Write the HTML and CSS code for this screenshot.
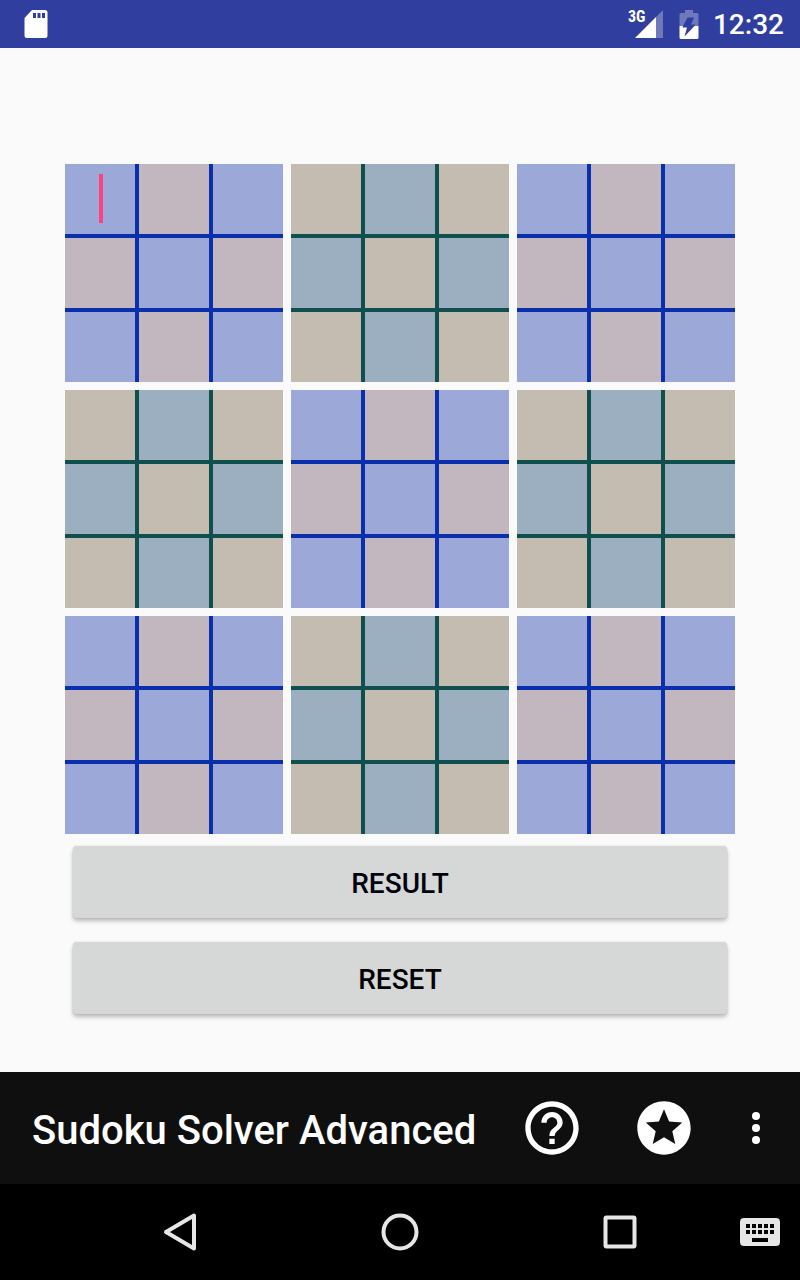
FILE: index.html
```html
<!DOCTYPE html>
<html lang="en">
<head>
<meta charset="utf-8">
<meta name="viewport" content="width=device-width, initial-scale=1">
<title>Sudoku Solver Advanced</title>
<link rel="stylesheet" href="styles.css">
</head>
<body>
<header class="status">
  <svg class="status-sd" viewBox="0 0 24 28" aria-hidden="true">
    <path fill="#fff" fill-rule="evenodd" d="M8 0h13q2.500 0 2.500 2.500V25.500q0 2.500-2.500 2.500H3q-2.500 0-2.500-2.500V8zM9 3v5h3V3zm4.500 0v5h3V3zM18 3v5h3V3z"/>
  </svg>
  <div class="status-right">
    <span class="signal">
      <svg class="signal-icon" viewBox="0 0 28 28" aria-hidden="true">
        <path fill="#fff" fill-opacity=".3" d="M28 0v28h-7V7z"/>
        <path fill="#fff" d="M21 7v21H0z"/>
      </svg>
      <span class="signal-label">3G</span>
    </span>
    <svg class="battery" viewBox="0 0 20 29" aria-hidden="true">
      <path fill="#fff" fill-opacity=".3" fill-rule="evenodd" d="M6 0h8v3h4q1.500 0 1.500 1.500V16h-4l.500-1.500h-4L15 7.500H8.500L4 16H.5V4.500Q.5 3 2 3h4z"/>
      <path fill="#fff" fill-rule="evenodd" d="M.5 16H4l-.500 1.500H8L5.500 26.500 15.500 16h4v11.500q0 1.500-1.500 1.500H2q-1.500 0-1.500-1.500z"/>
    </svg>
    <time class="clock">12:32</time>
  </div>
</header>

<main class="content">
  <form class="solver">
    <div class="board" id="board"></div>
    <div class="actions">
      <button class="action action-result" type="button">RESULT</button>
      <button class="action" type="reset">RESET</button>
    </div>
  </form>
</main>

<div class="toolbar">
  <h1 class="title">Sudoku Solver Advanced</h1>
  <button class="tool" type="button" aria-label="Help">
    <svg class="tool-icon" viewBox="0 0 24 24"><path d="M11 18h2v-2h-2v2zm1-16C6.480 2 2 6.480 2 12s4.480 10 10 10 10-4.480 10-10S17.520 2 12 2zm0 18c-4.410 0-8-3.590-8-8s3.590-8 8-8 8 3.590 8 8-3.590 8-8 8zm0-14c-2.210 0-4 1.790-4 4h2c0-1.100.9-2 2-2s2 .9 2 2c0 2-3 1.750-3 5h2c0-2.250 3-2.500 3-5 0-2.210-1.790-4-4-4z"/></svg>
  </button>
  <button class="tool" type="button" aria-label="Rate">
    <svg class="tool-icon" viewBox="0 0 24 24"><path d="M11.990 2C6.470 2 2 6.480 2 12s4.470 10 9.990 10C17.520 22 22 17.520 22 12S17.520 2 11.990 2zm4.240 16L12 15.450 7.770 18l1.120-4.810-3.730-3.230 4.920-.42L12 5l1.920 4.530 4.920.42-3.730 3.230L16.230 18z"/></svg>
  </button>
  <button class="tool tool-more" type="button" aria-label="More options">
    <svg class="more-icon" viewBox="0 0 8 32"><circle cx="4" cy="4" r="4"/><circle cx="4" cy="16" r="4"/><circle cx="4" cy="28" r="4"/></svg>
  </button>
</div>

<nav class="navbar" aria-label="System">
  <span></span>
  <button class="nav-key" type="button" aria-label="Back">
    <svg class="nav-icon" viewBox="0 0 40 40"><path d="M34 3.500v33L6 20z"/></svg>
  </button>
  <button class="nav-key" type="button" aria-label="Home">
    <svg class="nav-icon" viewBox="0 0 40 40"><circle cx="20" cy="20" r="16.500"/></svg>
  </button>
  <button class="nav-key" type="button" aria-label="Recent apps">
    <svg class="nav-icon" viewBox="0 0 40 40"><rect x="5.500" y="5.500" width="29" height="29" rx="1"/></svg>
  </button>
  <button class="nav-key nav-keyboard" type="button" aria-label="Keyboard">
    <svg class="keyboard-icon" viewBox="0 0 40 28"><path fill="#e6e6e6" fill-rule="evenodd" d="M4 0h32q4 0 4 4v20q0 4-4 4H4q-4 0-4-4V4q0-4 4-4zM6 6v4h4V6zm6 0v4h4V6zm6 0v4h4V6zm6 0v4h4V6zm6 0v4h4V6zM6 12v4h4v-4zm6 0v4h4v-4zm6 0v4h4v-4zm6 0v4h4v-4zm6 0v4h4v-4zM12 20v4h16v-4z"/></svg>
  </button>
</nav>
<script src="board.js"></script>
</body>
</html>
```
FILE: board.js
```js
const board = document.getElementById("board");

for (let b = 0; b < 9; b++) {
  const box = document.createElement("div");
  box.className = b % 2 ? "box box-green" : "box box-blue";
  for (let c = 0; c < 9; c++) {
    const row = Math.floor(b / 3) * 3 + Math.floor(c / 3) + 1;
    const col = (b % 3) * 3 + (c % 3) + 1;
    const cell = document.createElement("label");
    cell.className = c % 2 ? "cell cell-odd" : "cell";
    const input = document.createElement("input");
    input.className = "digit";
    input.type = "text";
    input.inputMode = "numeric";
    input.maxLength = 1;
    input.setAttribute("aria-label", `Row ${row}, column ${col}`);
    cell.append(input);
    if (b === 0 && c === 0) {
      const caret = document.createElement("span");
      caret.className = "caret";
      cell.append(caret);
    }
    box.append(cell);
  }
  board.append(box);
}
```
FILE: styles.css
```css
* {
  box-sizing: border-box;
}

body {
  margin: 0;
  min-height: 100vh;
  display: flex;
  flex-direction: column;
  background: #fafafa;
  font-family: Roboto, "Liberation Sans", sans-serif;
  font-weight: 500;
}

button {
  font: inherit;
  border: 0;
  padding: 0;
  background: none;
  cursor: pointer;
}

svg {
  display: block;
}

/* Status bar */
.status {
  display: flex;
  justify-content: space-between;
  align-items: center;
  height: 48px;
  padding: 0 16px 0 24px;
  background: #303f9f;
  color: #fff;
}

.status-sd {
  width: 24px;
  height: 28px;
}

.status-right {
  display: flex;
  align-items: center;
  gap: 14px;
}

.signal {
  position: relative;
  margin-right: 2px;
}

.signal-icon {
  width: 28px;
  height: 28px;
}

.signal-label {
  position: absolute;
  left: -7px;
  top: -1px;
  font-family: "Roboto Condensed", Roboto, sans-serif;
  font-size: 16px;
  line-height: 16px;
  font-weight: 700;
}

.battery {
  width: 20px;
  height: 29px;
}

.clock {
  padding-top: 2px;
  font-size: 28px;
  line-height: 32px;
}

/* Board */
.content {
  flex: 1;
  padding: 116px 16px 32px;
}

.solver {
  max-width: 670px;
  margin: 0 auto;
}

.board {
  display: grid;
  grid-template-columns: repeat(3, 1fr);
  gap: 8px;
}

.box {
  display: grid;
  grid-template-columns: repeat(3, 1fr);
  gap: 4px;
}

.box-blue {
  background: #0a2fad;
}

.box-green {
  background: #0f504e;
}

.cell {
  position: relative;
  aspect-ratio: 1;
  background: #9ba8d8;
}

.cell-odd {
  background: #c2b7bf;
}

.box-green .cell {
  background: #c4bcb0;
}

.box-green .cell-odd {
  background: #9bafc0;
}

.digit {
  display: block;
  width: 100%;
  height: 100%;
  padding: 0;
  border: 0;
  outline: 0;
  background: transparent;
  font: inherit;
  font-size: 36px;
  text-align: center;
}

.caret {
  position: absolute;
  left: 34px;
  top: 10px;
  width: 4px;
  height: 49px;
  background: #ff4081;
}

/* Buttons */
.actions {
  display: grid;
  gap: 24px;
  padding: 12px 8px;
}

.action {
  height: 72px;
  padding-top: 2px;
  border-radius: 4px;
  background: #d6d8d7;
  box-shadow: 0 3px 4px rgba(0, 0, 0, 0.26), 0 0 2px rgba(0, 0, 0, 0.12);
  color: #000;
  font-size: 28px;
}

.action-result {
  color: #00000f;
}

/* Toolbar */
.toolbar {
  display: flex;
  align-items: center;
  height: 112px;
  padding-left: 32px;
  background: #0f0f0f;
  color: #fff;
}

.title {
  flex: 1;
  margin: 0;
  padding-top: 6px;
  font-size: 40px;
  line-height: 48px;
  font-weight: 500;
  white-space: nowrap;
}

.tool {
  display: grid;
  place-items: center;
  width: 112px;
  height: 112px;
  fill: #fff;
}

.tool-more {
  width: 80px;
  padding-right: 8px;
}

.tool-icon {
  width: 64px;
  height: 64px;
}

.more-icon {
  width: 8px;
  height: 32px;
}

/* System navigation */
.navbar {
  display: grid;
  grid-template-columns: 70fr 220fr 220fr 220fr 70fr;
  height: 96px;
  background: #000;
}

.nav-key {
  display: grid;
  place-items: center;
}

.nav-keyboard {
  padding-right: 10px;
}

.nav-icon {
  width: 40px;
  height: 40px;
  fill: none;
  stroke: #e6e6e6;
  stroke-width: 4;
  stroke-linejoin: round;
}

.keyboard-icon {
  width: 40px;
  height: 28px;
}
```
